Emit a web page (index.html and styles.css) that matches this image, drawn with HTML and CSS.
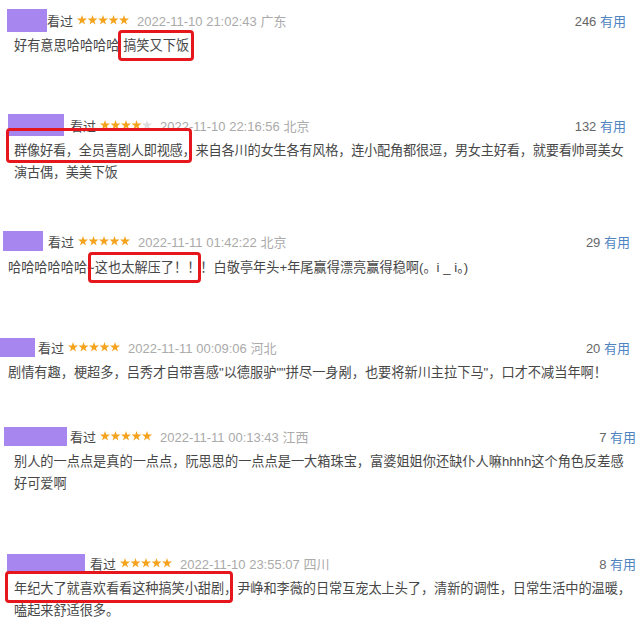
FILE: index.html
```html
<!DOCTYPE html>
<html lang="zh">
<head>
<meta charset="utf-8">
<link rel="stylesheet" href="styles.css">
</head>
<body>
<main class="list">
  <section class="review r1">
    <div class="meta">
      <span class="avatar"></span>
      <span class="watched">看过</span>
      <span class="stars s5"><i></i><i></i><i></i><i></i><i></i></span>
      <span class="time">2022-11-10 21:02:43 广东</span>
      <span class="votes"><span class="count">246</span> <span class="useful">有用</span></span>
    </div>
    <p class="content">好有意思哈哈哈哈 搞笑又下饭</p>
    <span class="mark"></span>
  </section>

  <section class="review r2">
    <div class="meta">
      <span class="avatar"></span>
      <span class="watched">看过</span>
      <span class="stars s4"><i></i><i></i><i></i><i></i><i class="off"></i></span>
      <span class="time">2022-11-10 22:16:56 北京</span>
      <span class="votes"><span class="count">132</span> <span class="useful">有用</span></span>
    </div>
    <p class="content">群像好看，全员喜剧人即视感，来自各川的女生各有风格，连小配角都很逗，男女主好看，就要看帅哥美女<br>演古偶，美美下饭</p>
    <span class="mark"></span>
  </section>

  <section class="review r3">
    <div class="meta">
      <span class="avatar"></span>
      <span class="watched">看过</span>
      <span class="stars"><i></i><i></i><i></i><i></i><i></i></span>
      <span class="time">2022-11-11 01:42:22 北京</span>
      <span class="votes"><span class="count">29</span> <span class="useful">有用</span></span>
    </div>
    <p class="content">哈哈哈哈哈哈~这也太解压了！！！白敬亭年头+年尾赢得漂亮赢得稳啊(。i _ i。)</p>
    <span class="mark"></span>
  </section>

  <section class="review r4">
    <div class="meta">
      <span class="avatar"></span>
      <span class="watched">看过</span>
      <span class="stars"><i></i><i></i><i></i><i></i><i></i></span>
      <span class="time">2022-11-11 00:09:06 河北</span>
      <span class="votes"><span class="count">20</span> <span class="useful">有用</span></span>
    </div>
    <p class="content">剧情有趣，梗超多，吕秀才自带喜感"以德服驴""拼尽一身剐，也要将新川主拉下马"，口才不减当年啊！</p>
  </section>

  <section class="review r5">
    <div class="meta">
      <span class="avatar"></span>
      <span class="watched">看过</span>
      <span class="stars"><i></i><i></i><i></i><i></i><i></i></span>
      <span class="time">2022-11-11 00:13:43 江西</span>
      <span class="votes"><span class="count">7</span> <span class="useful">有用</span></span>
    </div>
    <p class="content">别人的一点点是真的一点点，阮思思的一点点是一大箱珠宝，富婆姐姐你还缺仆人嘛hhhh这个角色反差感<br>好可爱啊</p>
  </section>

  <section class="review r6">
    <div class="meta">
      <span class="avatar"></span>
      <span class="watched">看过</span>
      <span class="stars"><i></i><i></i><i></i><i></i><i></i></span>
      <span class="time">2022-11-10 23:55:07 四川</span>
      <span class="votes"><span class="count">8</span> <span class="useful">有用</span></span>
    </div>
    <p class="content">年纪大了就喜欢看看这种搞笑小甜剧，尹峥和李薇的日常互宠太上头了，清新的调性，日常生活中的温暖，<br>嗑起来舒适很多。</p>
    <span class="mark"></span>
  </section>
</main>
</body>
</html>
```

FILE: styles.css
```css
* { box-sizing: border-box; }
html, body { margin: 0; padding: 0; background: #fff; }
body {
  width: 640px;
  height: 624px;
  overflow: hidden;
  font-family: "Liberation Sans", "Noto Sans CJK SC", sans-serif;
  font-size: 13px;
  color: #474747;
}
.list { display: flex; flex-direction: column; }
.review { position: relative; }
.meta {
  display: flex;
  align-items: center;
  height: 22px;
  white-space: nowrap;
}
.avatar {
  display: block;
  background: #a787ef;
  flex: none;
}
.watched { color: #4a4a4a; margin-right: 4px; }
.stars { display: flex; gap: 0.5px; margin-right: 8px; }
.stars i {
  display: block;
  width: 10px;
  height: 10px;
  background: #f5a21c;
  clip-path: polygon(50% 0%, 61.8% 35.5%, 100% 36.2%, 69.1% 58.8%, 80.9% 95.1%, 50% 73%, 19.1% 95.1%, 30.9% 58.8%, 0% 36.2%, 38.2% 35.5%);
}
.stars i.off { background: #dcdcdc; }
.time { color: #aaa; }
.votes { margin-left: auto; color: #666; }
.useful { color: #4f84bf; }
.content {
  margin: 4px 0 0;
  line-height: 22px;
  font-size: 13.2px;
  white-space: nowrap;
}
.mark {
  position: absolute;
  border: 3px solid #e5171d;
  border-radius: 4px;
}

/* review 1 */
.r1 { height: 100px; padding: 9px 14px 0 7px; }
.r1 .avatar { width: 40px; height: 23px; margin-right: 0; }
.r1 .content { padding-left: 7px; }
.r1 .mark { left: 118px; top: 30px; width: 76px; height: 31px; }

/* review 2 */
.r2 { height: 125px; padding: 14px 14px 0 8px; }
.r2 .avatar { width: 56px; height: 22px; margin-right: 6px; }
.r2 .content { padding-left: 6px; letter-spacing: -0.22px; }
.r2 .mark { left: 6px; top: 28px; width: 186px; height: 35px; }

/* review 3 */
.r3 { height: 105px; padding: 5px 10px 0 3px; }
.r3 .avatar { width: 40px; height: 20px; margin-right: 5px; }
.r3 .content { padding-left: 5px; margin-top: 5px; }
.r3 .mark { left: 88px; top: 27px; width: 113px; height: 31px; }

/* review 4 */
.r4 { height: 85px; padding: 6px 10px 0 0; }
.r4 .avatar { width: 35px; height: 19px; margin-right: 3px; }
.r4 .content { padding-left: 8px; }

/* review 5 */
.r5 { height: 130px; padding: 10px 4px 0 4px; }
.r5 .avatar { width: 63px; height: 19px; margin-right: 3px; }
.r5 .content { padding-left: 10px; }

/* review 6 */
.r6 { height: 79px; padding: 7px 4px 0 7px; }
.r6 .avatar { width: 78px; height: 18px; margin-right: 5px; }
.r6 .content { padding-left: 7px; margin-top: 4px; letter-spacing: -0.06px; }
.r6 .mark { left: 5px; top: 26px; width: 228px; height: 32px; }
```
